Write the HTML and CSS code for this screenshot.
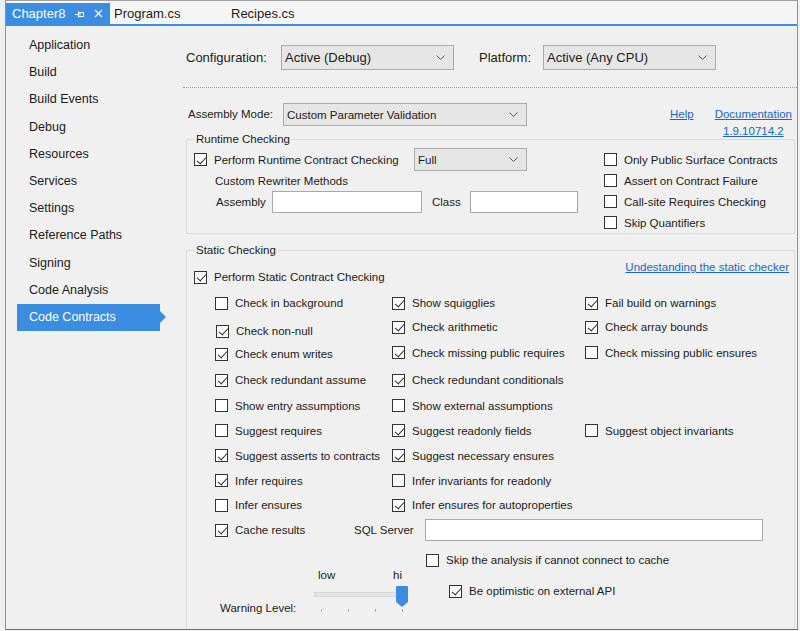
FILE: index.html
```html
<!DOCTYPE html>
<html>
<head>
<meta charset="utf-8">
<title>Chapter8 - Code Contracts</title>
<link rel="stylesheet" href="styles.css">
</head>
<body>
<div class="window">
  <div class="tabbar">
    <div class="tab active">
      <span class="tab-title">Chapter8</span>
      <svg class="pin" width="9" height="8" viewBox="0 0 9 8"><path d="M0 4.5H3M3.5 1.5V7.5M3.5 2.5H8.5V6.5H3.5M5 2.5V5.5" fill="none" stroke="#fff" stroke-width="1"/></svg>
      <svg class="close" width="9" height="9" viewBox="0 0 9 9"><path d="M1 1L8 8M8 1L1 8" stroke="#fff" stroke-width="1.1"/></svg>
    </div>
    <div class="tab">Program.cs</div>
    <div class="tab">Recipes.cs</div>
  </div>
  <div class="body">
    <nav class="nav">
      <div class="nav-item">Application</div>
      <div class="nav-item">Build</div>
      <div class="nav-item">Build Events</div>
      <div class="nav-item">Debug</div>
      <div class="nav-item">Resources</div>
      <div class="nav-item">Services</div>
      <div class="nav-item">Settings</div>
      <div class="nav-item">Reference Paths</div>
      <div class="nav-item">Signing</div>
      <div class="nav-item">Code Analysis</div>
      <div class="nav-item active">Code Contracts</div>
    </nav>
    <main class="content">
      <div class="config-row">
        <span class="cfg-label">Configuration:</span>
        <div class="select cfg-select"><span>Active (Debug)</span><svg class="chev" width="9" height="6" viewBox="0 0 9 6"><path d="M0.5 0.5L4.5 4.5L8.5 0.5" fill="none" stroke="#555" stroke-width="1"/></svg></div>
        <span class="plat-label">Platform:</span>
        <div class="select cfg-select"><span>Active (Any CPU)</span><svg class="chev" width="9" height="6" viewBox="0 0 9 6"><path d="M0.5 0.5L4.5 4.5L8.5 0.5" fill="none" stroke="#555" stroke-width="1"/></svg></div>
      </div>
      <div class="sep"></div>
      <div class="asm-row">
        <span class="asm-label">Assembly Mode:</span>
        <div class="select asm-select"><span>Custom Parameter Validation</span><svg class="chev" width="9" height="6" viewBox="0 0 9 6"><path d="M0.5 0.5L4.5 4.5L8.5 0.5" fill="none" stroke="#555" stroke-width="1"/></svg></div>
        <div class="links">
          <a class="link">Help</a>
          <div class="doc"><a class="link">Documentation</a><a class="link">1.9.10714.2</a></div>
        </div>
      </div>

      <fieldset class="group runtime">
        <legend>Runtime Checking</legend>
        <div class="rt-body">
          <div class="rt-left">
            <div class="rt-row1">
              <label class="chk rt-perform"><span class="box on"></span>Perform Runtime Contract Checking</label>
              <div class="select full-select"><span>Full</span><svg class="chev" width="9" height="6" viewBox="0 0 9 6"><path d="M0.5 0.5L4.5 4.5L8.5 0.5" fill="none" stroke="#555" stroke-width="1"/></svg></div>
            </div>
            <div class="rt-row2">Custom Rewriter Methods</div>
            <div class="rt-row3">
              <span class="asmb-label">Assembly</span>
              <div class="input asmb-input"></div>
              <span class="class-label">Class</span>
              <div class="input class-input"></div>
            </div>
          </div>
          <div class="rt-right">
            <label class="chk"><span class="box"></span>Only Public Surface Contracts</label>
            <label class="chk"><span class="box"></span>Assert on Contract Failure</label>
            <label class="chk"><span class="box"></span>Call-site Requires Checking</label>
            <label class="chk"><span class="box"></span>Skip Quantifiers</label>
          </div>
        </div>
      </fieldset>

      <fieldset class="group static">
        <legend>Static Checking</legend>
        <div class="st-head">
          <label class="chk st-perform"><span class="box on"></span>Perform Static Contract Checking</label>
          <a class="link st-link">Undestanding the static checker</a>
        </div>
        <div class="st-grid">
          <label class="chk"><span class="box"></span>Check in background</label>
          <label class="chk"><span class="box on"></span>Show squigglies</label>
          <label class="chk"><span class="box on"></span>Fail build on warnings</label>

          <label class="chk nudge"><span class="box on"></span>Check non-null</label>
          <label class="chk lift"><span class="box on"></span>Check arithmetic</label>
          <label class="chk lift"><span class="box on"></span>Check array bounds</label>

          <label class="chk"><span class="box on"></span>Check enum writes</label>
          <label class="chk lift"><span class="box on"></span>Check missing public requires</label>
          <label class="chk lift"><span class="box"></span>Check missing public ensures</label>

          <label class="chk"><span class="box on"></span>Check redundant assume</label>
          <label class="chk"><span class="box on"></span>Check redundant conditionals</label>
          <div></div>

          <label class="chk"><span class="box"></span>Show entry assumptions</label>
          <label class="chk"><span class="box"></span>Show external assumptions</label>
          <div></div>

          <label class="chk"><span class="box"></span>Suggest requires</label>
          <label class="chk"><span class="box on"></span>Suggest readonly fields</label>
          <label class="chk"><span class="box"></span>Suggest object invariants</label>

          <label class="chk"><span class="box on"></span>Suggest asserts to contracts</label>
          <label class="chk"><span class="box on"></span>Suggest necessary ensures</label>
          <div></div>

          <label class="chk"><span class="box on"></span>Infer requires</label>
          <label class="chk"><span class="box"></span>Infer invariants for readonly</label>
          <div></div>

          <label class="chk"><span class="box"></span>Infer ensures</label>
          <label class="chk"><span class="box on"></span>Infer ensures for autoproperties</label>
          <div></div>
        </div>
        <div class="st-cache">
          <label class="chk cache-chk"><span class="box on"></span>Cache results</label>
          <span class="sql-label">SQL Server</span>
          <div class="input sql-input"></div>
        </div>
        <div class="st-bottom">
          <div class="warn-block">
            <span class="warn-label">Warning Level:</span>
            <div class="slider">
              <div class="slider-labels"><span>low</span><span>hi</span></div>
              <div class="track-area">
                <div class="track"></div>
                <svg class="thumb" width="12" height="21" viewBox="0 0 12 21"><path d="M0 1Q0 0 1 0H11Q12 0 12 1V16L6 21L0 16Z" fill="#3a8de0"/></svg>
              </div>
              <div class="ticks"><span></span><span></span><span></span><span></span></div>
            </div>
          </div>
          <div class="cache-opts">
            <label class="chk"><span class="box"></span>Skip the analysis if cannot connect to cache</label>
            <label class="chk optimistic"><span class="box on"></span>Be optimistic on external API</label>
          </div>
        </div>
      </fieldset>
    </main>
  </div>
</div>
</body>
</html>
```
FILE: styles.css
```css
* { box-sizing: border-box; }
html, body { margin: 0; padding: 0; }
body {
  background: #f0f0f0;
  font-family: "Liberation Sans", Arial, sans-serif;
  color: #1b1b1b;
  width: 800px;
  height: 631px;
  overflow: hidden;
}
.window {
  margin-left: 5px;
  width: 793px;
  height: 630px;
  border-left: 1px solid #8f8f8f;
  border-right: 1px solid #8f8f8f;
  border-top: 1px solid #a0a0a0;
  border-bottom: 1px solid #6e6e6e;
  display: flex;
  flex-direction: column;
}

/* tabs */
.tabbar {
  height: 25px;
  flex: none;
  display: flex;
  align-items: flex-end;
  background: #f5f5f6;
  border-bottom: 2px solid #3a8de0;
  font-size: 13px;
}
.tab {
  height: 21px;
  display: flex;
  align-items: center;
}
.tab.active {
  width: 104px;
  background: #3a8de0;
  color: #fff;
  padding-left: 6px;
}
.pin { margin-left: 10px; }
.close { margin-left: 10px; }
.tab:nth-child(2) { padding-left: 4px; width: 121px; }

/* layout */
.body { flex: 1; display: flex; min-height: 0; }
.nav {
  width: 177px;
  flex: none;
  padding: 6px 0 0 11px;
}
.nav-item {
  width: 143px;
  height: 27.2px;
  line-height: 27px;
  padding-left: 12px;
  font-size: 12.5px;
  position: relative;
}
.nav-item.active {
  background: #3a8de0;
  color: #fff;
}
.nav-item.active::after {
  content: "";
  position: absolute;
  right: -6px;
  top: 7px;
  border-left: 6px solid #3a8de0;
  border-top: 6px solid transparent;
  border-bottom: 6px solid transparent;
}
.content {
  flex: 1;
  display: flex;
  flex-direction: column;
  min-width: 0;
}

/* selects & inputs */
.select {
  display: flex;
  align-items: center;
  justify-content: space-between;
  background: #e6e6e6;
  border: 1px solid #acacac;
  padding: 0 8px 0 3px;
  flex: none;
}
.chev { flex: none; }
.input {
  background: #fff;
  border: 1px solid #a9a9a9;
  flex: none;
}

/* config row */
.config-row {
  margin-top: 19px;
  height: 25px;
  display: flex;
  align-items: center;
  padding-left: 3px;
  font-size: 13px;
  flex: none;
}
.cfg-label { width: 95px; }
.cfg-select { width: 173px; height: 25px; }
.plat-label { width: 64px; margin-left: 25px; }
.sep {
  margin-top: 17px;
  border-top: 1px dotted #9a9a9a;
  flex: none;
}

/* assembly row */
.asm-row {
  margin-top: 15px;
  height: 23px;
  display: flex;
  align-items: flex-start;
  padding: 0 5px 0 5px;
  font-size: 11.5px;
  flex: none;
}
.asm-label { width: 95px; line-height: 23px; }
.asm-select { width: 244px; height: 23px; }
.links {
  margin-left: auto;
  display: flex;
  gap: 21px;
  line-height: 17px;
  padding-top: 3px;
}
.doc { display: flex; flex-direction: column; align-items: center; }
.link { color: #1c66c8; text-decoration: underline; }

/* groups */
.group {
  border: 1px solid #dadada;
  margin: 0 2px 0 3px;
  padding: 0 0 0 7px;
  min-width: 0;
}
.group legend {
  padding: 0 2px;
  font-size: 11.5px;
  line-height: 14px;
}
.chk {
  display: flex;
  align-items: center;
  gap: 7px;
  font-size: 11.5px;
  white-space: nowrap;
}
.box {
  width: 13px;
  height: 13px;
  border: 1px solid #333;
  background: #fff;
  position: relative;
  flex: none;
}
.box.on::after {
  content: "";
  position: absolute;
  left: 3.5px;
  top: 0.5px;
  width: 4px;
  height: 8px;
  border: solid #2b2b2b;
  border-width: 0 1.2px 1.2px 0;
  transform: rotate(42deg);
}

/* runtime group */
.runtime { margin-top: 6px; flex: none; }
.rt-body { display: flex; }
.rt-left { width: 384px; padding-top: 2px; font-size: 11.5px; }
.rt-row1 { display: flex; align-items: center; height: 23px; }
.rt-perform { width: 220px; }
.full-select { width: 113px; height: 23px; }
.rt-row2 { height: 20px; line-height: 20px; padding-left: 21px; }
.rt-row3 { height: 22px; display: flex; align-items: center; padding-left: 22px; }
.asmb-label { width: 56px; }
.asmb-input { width: 150px; height: 22px; }
.class-label { width: 38px; margin-left: 10px; }
.class-input { width: 108px; height: 22px; }
.rt-right { margin-left: 26px; padding-top: 3px; }
.rt-right .chk { height: 21px; }

/* static group */
.static {
  margin-top: 9px;
  flex: 1;
  border-bottom: none;
}
.st-head {
  height: 33px;
  display: flex;
  align-items: flex-start;
  padding-right: 5px;
}
.st-perform { margin-top: 10px; height: 20px; }
.st-link { margin-left: auto; font-size: 11.5px; line-height: 20px; }
.st-grid {
  margin-left: 21px;
  display: grid;
  grid-template-columns: 177px 193px 1fr;
  grid-template-rows: 26px 25px 26px 26px 25px 25px 25px 25px 24px;
  align-items: center;
}
.nudge { margin-top: 5px; margin-left: 1px; }
.lift { margin-bottom: 3px; }
.st-cache {
  margin-left: 21px;
  height: 26px;
  display: flex;
  align-items: center;
  font-size: 11.5px;
}
.cache-chk { width: 139px; }
.sql-label { width: 71px; }
.sql-input { width: 338px; height: 22px; }

.st-bottom { margin-left: 21px; display: flex; align-items: flex-start; }
.warn-block {
  width: 211px;
  padding: 25px 0 0 5px;
  display: flex;
  align-items: flex-end;
  font-size: 11.5px;
}
.warn-label { width: 94px; line-height: 14px; margin-bottom: -3px; }
.slider { width: 94px; }
.slider-labels {
  display: flex;
  justify-content: space-between;
  line-height: 14px;
  padding: 0 6px 0 4px;
}
.track-area { height: 24px; padding-top: 10px; position: relative; }
.track {
  width: 87px;
  height: 5px;
  background: #e4e4e4;
  border: 1px solid #d8d8d8;
}
.thumb { position: absolute; left: 82px; top: 4px; }
.ticks { display: flex; gap: 26px; padding-left: 7px; margin-top: 3px; height: 3px; }
.ticks span { width: 1px; height: 3px; background: #b0b0b0; }
.cache-opts { margin-top: 7px; }
.cache-opts .chk { height: 20px; }
.optimistic { margin-top: 11px; margin-left: 23px; }
```
